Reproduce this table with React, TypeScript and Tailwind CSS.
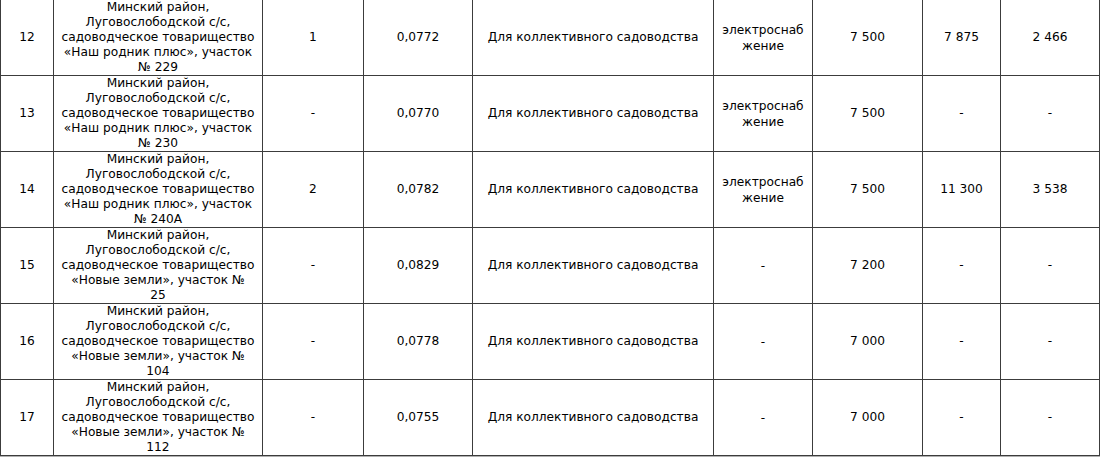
import React from 'react';

type Row = {
  n: string;
  addr: string[];
  qty: string;
  area: string;
  util: string[];
  price: string;
  a: string;
  b: string;
};

const rows: Row[] = [
  {
    n: '12',
    addr: ['Минский район,', 'Луговослободской с/с,', 'садоводческое товарищество', '«Наш родник плюс», участок', '№ 229'],
    qty: '1',
    area: '0,0772',
    util: ['электроснаб', 'жение'],
    price: '7 500',
    a: '7 875',
    b: '2 466',
  },
  {
    n: '13',
    addr: ['Минский район,', 'Луговослободской с/с,', 'садоводческое товарищество', '«Наш родник плюс», участок', '№ 230'],
    qty: '-',
    area: '0,0770',
    util: ['электроснаб', 'жение'],
    price: '7 500',
    a: '-',
    b: '-',
  },
  {
    n: '14',
    addr: ['Минский район,', 'Луговослободской с/с,', 'садоводческое товарищество', '«Наш родник плюс», участок', '№ 240А'],
    qty: '2',
    area: '0,0782',
    util: ['электроснаб', 'жение'],
    price: '7 500',
    a: '11 300',
    b: '3 538',
  },
  {
    n: '15',
    addr: ['Минский район,', 'Луговослободской с/с,', 'садоводческое товарищество', '«Новые земли», участок №', '25'],
    qty: '-',
    area: '0,0829',
    util: ['-'],
    price: '7 200',
    a: '-',
    b: '-',
  },
  {
    n: '16',
    addr: ['Минский район,', 'Луговослободской с/с,', 'садоводческое товарищество', '«Новые земли», участок №', '104'],
    qty: '-',
    area: '0,0778',
    util: ['-'],
    price: '7 000',
    a: '-',
    b: '-',
  },
  {
    n: '17',
    addr: ['Минский район,', 'Луговослободской с/с,', 'садоводческое товарищество', '«Новые земли», участок №', '112'],
    qty: '-',
    area: '0,0755',
    util: ['-'],
    price: '7 000',
    a: '-',
    b: '-',
  },
];

const td = 'border border-[#3c3c3c] text-center align-middle p-0 leading-[15px]';

const App = () => {
  return (
    <div className="w-[1100px] h-[458px] overflow-hidden bg-white text-black font-['DejaVu_Sans',sans-serif] text-[12.2px]">
      <table className="table-fixed border-collapse w-[1099px] -mt-px outline outline-1 outline-[#b0b0b0]">
        <colgroup>
          <col className="w-[53px]" />
          <col className="w-[209px]" />
          <col className="w-[101px]" />
          <col className="w-[109px]" />
          <col className="w-[241px]" />
          <col className="w-[99px]" />
          <col className="w-[110px]" />
          <col className="w-[78px]" />
          <col className="w-[99px]" />
        </colgroup>
        <tbody>
          {rows.map((r) => (
            <tr key={r.n} className="h-[76px]">
              <td className={td}>{r.n}</td>
              <td className={td}>
                {r.addr.map((l, i) => (
                  <div key={i} className="whitespace-nowrap">{l}</div>
                ))}
              </td>
              <td className={td}>{r.qty}</td>
              <td className={td}>{r.area}</td>
              <td className={td}>Для коллективного садоводства</td>
              <td className={td}>
                {r.util.map((l, i) => (
                  <div key={i} className="leading-[16px]">{l}</div>
                ))}
              </td>
              <td className={td}>{r.price}</td>
              <td className={td}>{r.a}</td>
              <td className={td}>{r.b}</td>
            </tr>
          ))}
        </tbody>
      </table>
    </div>
  );
};

export default App;
